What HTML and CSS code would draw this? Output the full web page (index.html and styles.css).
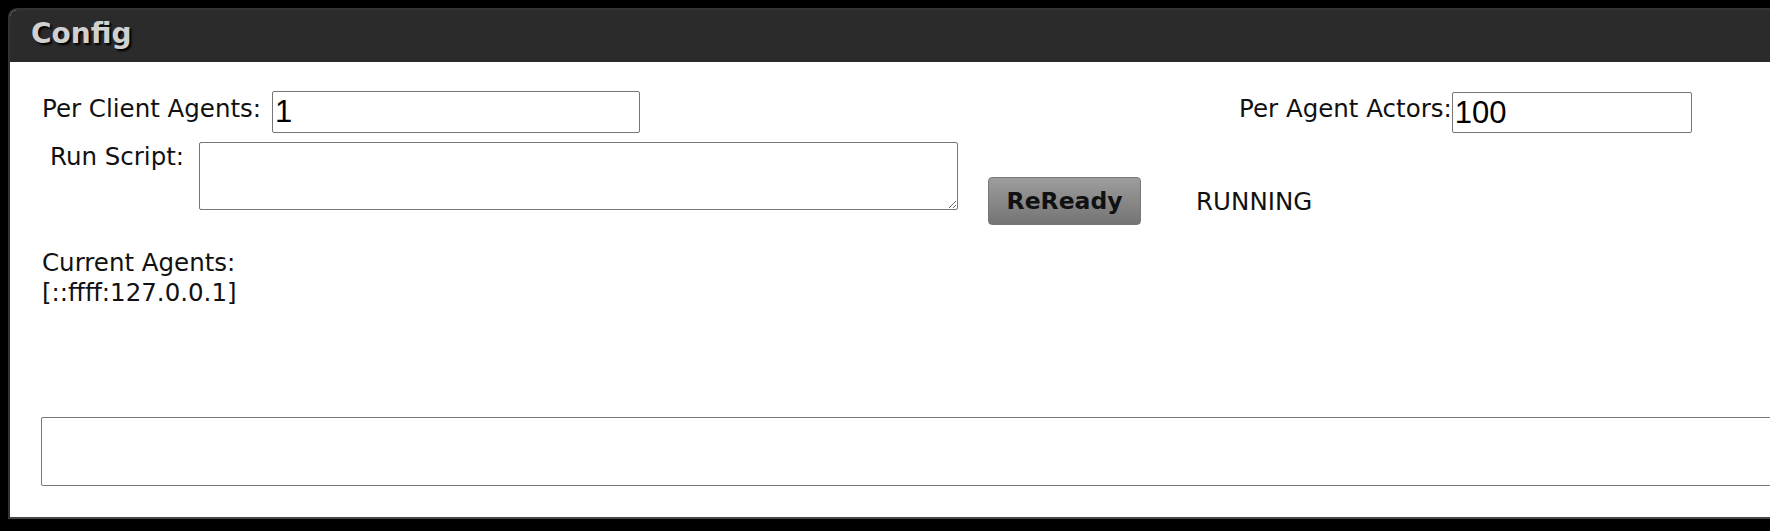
FILE: index.html
```html
<!DOCTYPE html>
<html>
<head>
<meta charset="utf-8">
<title>Config</title>
<link rel="stylesheet" href="styles.css">
</head>
<body>
<div class="panel">
  <div class="panel-header"><h2 class="panel-title">Config</h2></div>
  <div class="panel-body">
    <div class="row row-top">
      <div class="field">
        <label class="label label-client">Per Client Agents:</label>
        <input class="input input-client" type="text" value="1">
      </div>
      <div class="field field-actors">
        <label class="label label-actors">Per Agent Actors:</label>
        <input class="input input-actors" type="text" value="100">
      </div>
    </div>
    <div class="row row-script">
      <label class="label label-script">Run Script:</label>
      <textarea class="script-area"></textarea>
      <button class="btn-reready" type="button">ReReady</button>
      <span class="status">RUNNING</span>
    </div>
    <div class="agents">
      <div class="agents-title">Current Agents:</div>
      <div class="agents-list">[::ffff:127.0.0.1]</div>
    </div>
    <textarea class="log-area"></textarea>
  </div>
</div>
</body>
</html>
```
FILE: styles.css
```css
html, body {
  margin: 0;
  padding: 0;
  background: #000;
  overflow: hidden;
}

body {
  width: 1770px;
  height: 531px;
  font-family: "DejaVu Sans", Verdana, sans-serif;
  color: #111;
}

.panel {
  margin: 8px 0 0 8px;
  width: 1820px;
  background: #fff;
  border: 2px solid #333;
  border-bottom-color: #474747;
  border-right: none;
  border-radius: 9px 9px 0 0;
  overflow: hidden;
}

.panel-header {
  height: 52px;
  box-sizing: border-box;
  background: #2b2b2b;
  padding: 8px 0 0 21px;
}

.panel-title {
  margin: 0;
  font-family: "DejaVu Sans", Verdana, sans-serif;
  font-weight: bold;
  font-size: 28px;
  line-height: 32px;
  color: #d0d0d0;
  text-shadow: 2px 2px 2px #000;
}

.panel-body {
  padding: 29px 0 31px 32px;
}

.row {
  display: flex;
  align-items: flex-start;
}

.field {
  display: flex;
  align-items: flex-start;
}

.field-actors {
  margin-left: 599px;
}

.label {
  font-size: 24.5px;
  line-height: 28px;
  white-space: nowrap;
}

.label-client {
  margin-top: 4px;
  margin-right: 11px;
}

.label-actors {
  margin-top: 4px;
  margin-right: 0;
}

.input {
  box-sizing: border-box;
  height: 42px;
  border: 1px solid #767676;
  border-radius: 2px;
  padding: 0 2px;
  font-family: "Liberation Sans", Arial, sans-serif;
  font-size: 31px;
  color: #000;
  background: #fff;
  outline: none;
}

.input-client {
  width: 368px;
}

.input-actors {
  width: 240px;
  height: 41px;
  margin-top: 1px;
}

.row-script {
  margin-top: 9px;
}

.label-script {
  margin-top: 1px;
  margin-left: 8px;
  margin-right: 15px;
}

.script-area {
  box-sizing: border-box;
  width: 759px;
  height: 68px;
  border: 1px solid #767676;
  border-radius: 2px;
  margin: 0;
  padding: 2px;
  font-family: "Liberation Mono", monospace;
  font-size: 16px;
}

.btn-reready {
  box-sizing: border-box;
  width: 153px;
  height: 48px;
  margin: 35px 0 0 30px;
  padding: 0;
  background: linear-gradient(#9d9d9d, #747474);
  border: 1px solid #777;
  border-radius: 4px;
  font-family: "DejaVu Sans", Verdana, sans-serif;
  font-weight: bold;
  font-size: 23.5px;
  color: #111;
}

.status {
  margin: 46px 0 0 55px;
  font-size: 24.5px;
  line-height: 28px;
}

.agents {
  margin-top: 23px;
  font-size: 24.5px;
  line-height: 30px;
}

.log-area {
  display: block;
  box-sizing: border-box;
  width: 1760px;
  height: 69px;
  margin: 109px 0 0 -1px;
  border: 1px solid #767676;
  border-radius: 2px;
  padding: 2px;
  font-family: "Liberation Mono", monospace;
  font-size: 16px;
}
```
